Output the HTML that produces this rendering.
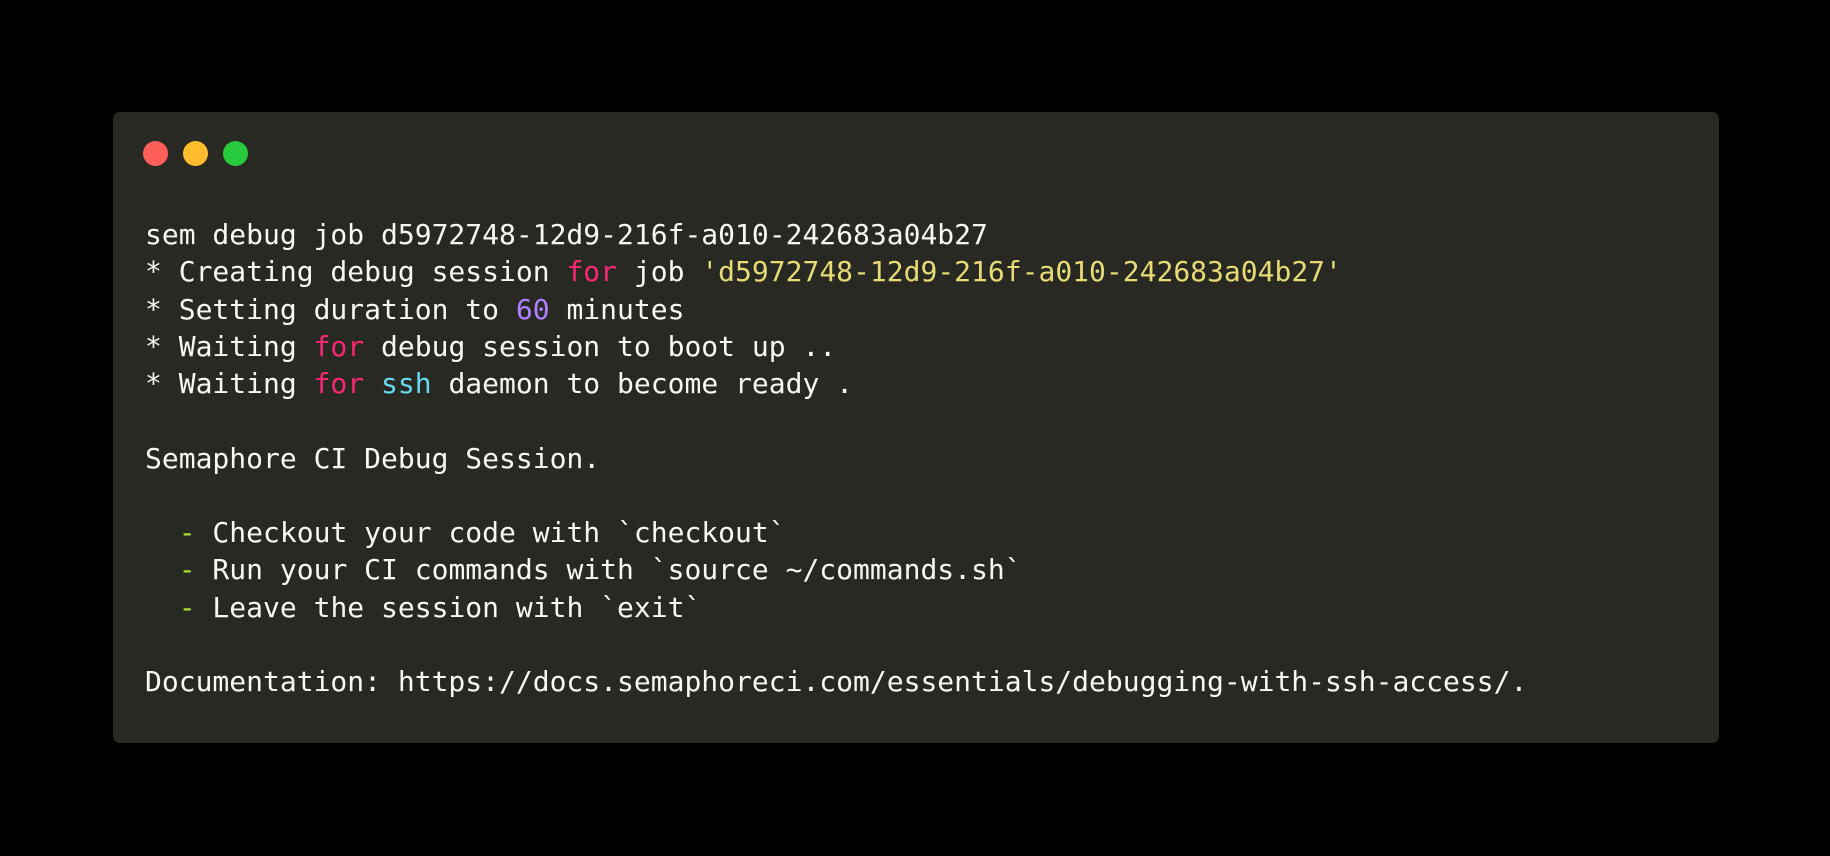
<!DOCTYPE html>
<html><head><meta charset="utf-8"><style>
html,body{margin:0;padding:0;background:#000;width:1830px;height:856px;overflow:hidden}
.win{position:absolute;left:113px;top:112px;width:1606px;height:631px;background:#282923;border-radius:7px}
.dot{position:absolute;top:141px;width:25px;height:25px;border-radius:50%}
pre{position:absolute;left:145px;top:216px;margin:0;font-family:"DejaVu Sans Mono","Liberation Mono",monospace;font-size:28px;line-height:37.25px;color:#f8f8f2}
.p{color:#f92672}.y{color:#e6db74}.v{color:#ae81ff}.c{color:#66d9ef}.g{color:#a6e22e}
</style></head><body>
<div class="win"></div>
<div class="dot" style="left:143px;background:#ff5f56"></div>
<div class="dot" style="left:183px;background:#ffbd2e"></div>
<div class="dot" style="left:223px;background:#27c93f"></div>
<pre>sem debug job d5972748-12d9-216f-a010-242683a04b27
* Creating debug session <span class="p">for</span> job <span class="y">'d5972748-12d9-216f-a010-242683a04b27'</span>
* Setting duration to <span class="v">60</span> minutes
* Waiting <span class="p">for</span> debug session to boot up ..
* Waiting <span class="p">for</span> <span class="c">ssh</span> daemon to become ready .

Semaphore CI Debug Session.

  <span class="g">-</span> Checkout your code with `checkout`
  <span class="g">-</span> Run your CI commands with `source ~/commands.sh`
  <span class="g">-</span> Leave the session with `exit`

Documentation: https://docs.semaphoreci.com/essentials/debugging-with-ssh-access/.</pre>
</body></html>
